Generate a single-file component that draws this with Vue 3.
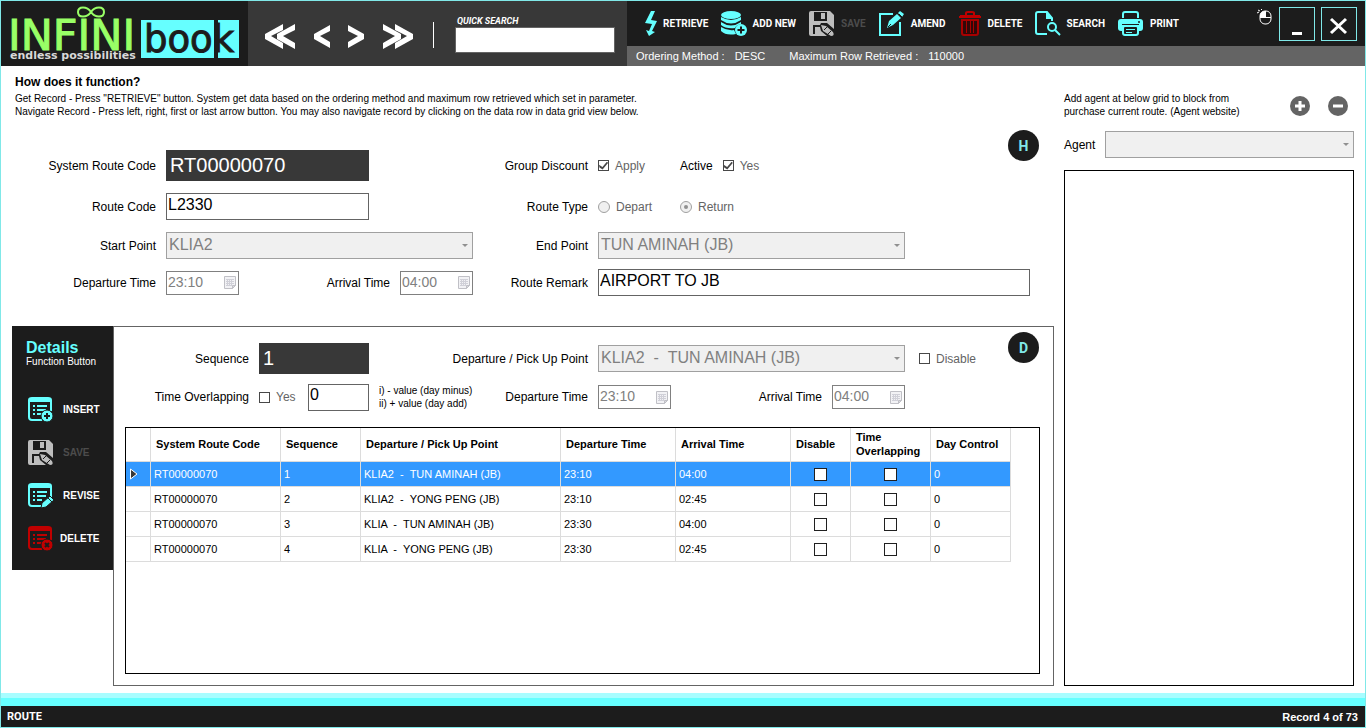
<script setup>
import { ref } from 'vue'

const quickSearch = ref('')
const agent = ref('')
const routeCode = ref('L2330')
const remark = ref('AIRPORT TO JB')
const dayControl = ref('0')

const columns = [
  { label: 'System Route Code', cls: 'c-code' },
  { label: 'Sequence', cls: 'c-seq' },
  { label: 'Departure / Pick Up Point', cls: 'c-point' },
  { label: 'Departure Time', cls: 'c-time' },
  { label: 'Arrival Time', cls: 'c-time' },
  { label: 'Disable', cls: 'c-disable' },
  { label: 'Time Overlapping', cls: 'c-over' },
  { label: 'Day Control', cls: 'c-day' },
]

const rows = [
  { seq: 1, point: 'KLIA2  -  TUN AMINAH (JB)', dep: '23:10', arr: '04:00' },
  { seq: 2, point: 'KLIA2  -  YONG PENG (JB)', dep: '23:10', arr: '02:45' },
  { seq: 3, point: 'KLIA  -  TUN AMINAH (JB)', dep: '23:30', arr: '04:00' },
  { seq: 4, point: 'KLIA  -  YONG PENG (JB)', dep: '23:30', arr: '02:45' },
]
const selected = ref(1)
</script>

<template>
  <div class="window">
    <svg class="defs" width="0" height="0" aria-hidden="true">
      <symbol id="i-save" viewBox="0 0 26 26">
        <path fill="currentColor" fill-rule="evenodd" d="M2 0H21L25 4V18L18 12H12L11 14H4V23H6V16H11L12 20L18 25H2Q0 25 0 23V2Q0 0 2 0ZM5 1V10H18V1Z" />
        <path fill="currentColor" d="M12 2H16V8H12ZM12 14L17 15L24 21Q26 25 22 25L14 20Z" />
        <path stroke="#1c1c1c" stroke-width="1" fill="none" d="M15 19L18 16M19 23L22 20" />
      </symbol>
      <symbol id="i-list" viewBox="0 0 26 26">
        <path fill="none" stroke="currentColor" stroke-width="2" d="M14 23H4Q1 23 1 20V3Q1 1 4 1H20Q23 1 23 3V14" />
        <path fill="currentColor" d="M1 1H23V5H1ZM5 8H7V10H5ZM9 8H19V10H9ZM5 12H7V14H5ZM9 12H18V14H9ZM5 16H7V18H5ZM9 16H14V18H9Z" />
      </symbol>
      <symbol id="i-calendar" viewBox="0 0 12 13">
        <path fill="#f2f2f5" stroke="#c0c0c6" d="M0.500 0.500H11.500V9.500L8.500 12.500H0.500Z" />
        <path stroke="#d0d0d8" fill="none" d="M2 3.500H10M2 5.500H10M2 7.500H10M2 9.500H8M3.500 3V10M5.500 3V10M7.500 3V10" />
        <path fill="#d8d8de" stroke="#c0c0c6" d="M8.500 12.500V9.500H11.500Z" />
      </symbol>
    </svg>

    <header class="header">
      <div class="logo">
        <svg width="240" height="64" viewBox="0 0 240 64" role="img" aria-label="INFINI book">
          <rect x="140" y="19" width="98" height="38" fill="#66ffff" />
          <path d="M215 19V57" stroke="#1c1c1c" stroke-width="4" />
          <path d="M90 11C86 5 77 5 77 11S86 17 90 11S103 5 103 11S94 17 90 11Z" fill="none" stroke="#99ff66" stroke-width="2" />
          <text class="logo-main" x="7" y="49">INFINI</text>
          <text class="logo-book" x="143" y="51">book</text>
          <text class="logo-tag" x="9" y="58">endless possibilities</text>
        </svg>
      </div>

      <div class="navigator">
        <nav class="arrows" aria-label="Record navigation">
          <button type="button" aria-label="First record">
            <svg width="32" height="27" viewBox="0 0 32 27"><path d="M19 1V7L7 13L19 20V26L1 16V11ZM31 1V7L19 13L31 20V26L13 16V11Z" /></svg>
          </button>
          <button type="button" aria-label="Previous record">
            <svg width="18" height="27" viewBox="0 0 18 27"><path d="M17 2V8L7 13L17 19V25L1 16V11Z" /></svg>
          </button>
          <button type="button" aria-label="Next record">
            <svg width="18" height="27" viewBox="0 0 18 27"><path d="M1 2V8L11 13L1 19V25L17 16V11Z" /></svg>
          </button>
          <button type="button" aria-label="Last record">
            <svg width="32" height="27" viewBox="0 0 32 27"><path d="M1 1V7L13 13L1 20V26L19 16V11ZM13 1V7L25 13L13 20V26L31 16V11Z" /></svg>
          </button>
        </nav>
        <span class="separator"></span>
        <div class="quick">
          <label for="quick">QUICK SEARCH</label>
          <input id="quick" v-model="quickSearch" type="text" />
        </div>
      </div>

      <div class="commands">
        <div class="toolbar">
          <button type="button" class="tool">
            <svg width="13" height="26" viewBox="0 0 13 26"><path fill="#66ffff" d="M6 0H10L6 9L12 10L7 20L10 21L4 25L1 19L4 20L7 13L0 12Z" /></svg>
            RETRIEVE
          </button>
          <button type="button" class="tool">
            <svg width="26" height="26" viewBox="0 0 26 26" fill="#66ffff">
              <ellipse cx="10" cy="4" rx="10" ry="4" />
              <path d="M0 6Q10 12 20 6V9Q10 16 0 9ZM0 11Q10 18 20 11V13Q15 14 14 17Q5 18 0 14ZM0 16Q6 20 13 19L15 23Q5 25 0 20Z" />
              <circle cx="20" cy="19" r="6" />
              <path d="M20 15.500V22.500M16.500 19H23.500" stroke="#1c1c1c" stroke-width="2" />
            </svg>
            ADD NEW
          </button>
          <button type="button" class="tool roomy off" disabled>
            <svg width="26" height="26"><use href="#i-save" /></svg>
            SAVE
          </button>
          <button type="button" class="tool roomy">
            <svg width="26" height="26" viewBox="0 0 26 26">
              <path fill="none" stroke="#66ffff" stroke-width="2" d="M14 3H1V24H21V11" />
              <path fill="#66ffff" d="M8 17L10 10L18 3L22 7L14 14ZM19 2L21 0L25 3L23 6Z" />
              <path stroke="#1c1c1c" d="M9 16L12 13M20 3L23 6" />
            </svg>
            AMEND
          </button>
          <button type="button" class="tool">
            <svg width="24" height="26" viewBox="0 0 24 26">
              <path fill="none" stroke="#c00000" stroke-width="2" d="M8 4V2Q8 1 10 1H14Q16 1 16 2V4M1 6H23" />
              <path fill="#c00000" d="M2 4H22V7H2Z" />
              <path fill="#300808" stroke="#a80000" stroke-width="2" d="M4 9H20V22Q20 24 18 24H6Q4 24 4 22Z" />
              <path stroke="#a80000" stroke-width="1" d="M8.500 10V22M12.500 10V22M15.500 10V22" />
            </svg>
            DELETE
          </button>
          <button type="button" class="tool">
            <svg width="26" height="26" viewBox="0 0 26 26" fill="none" stroke="#66ffff" stroke-width="2">
              <path d="M12 23H3Q1 23 1 21V3Q1 1 3 1H12L17 7V10" />
              <path fill="#66ffff" stroke="none" d="M11 0L18 8H11Z" />
              <circle cx="17" cy="16" r="4" />
              <path d="M20 19L25 24" />
            </svg>
            SEARCH
          </button>
          <button type="button" class="tool roomy">
            <svg width="26" height="26" viewBox="0 0 26 26">
              <path fill="none" stroke="#66ffff" stroke-width="2" d="M5 7V3Q5 1 7 1H18Q20 1 20 3V7" />
              <rect y="8" width="25" height="12" rx="3" fill="#66ffff" />
              <rect x="5" y="15" width="15" height="9" rx="2" fill="#1c1c1c" stroke="#66ffff" stroke-width="2" />
              <path stroke="#66ffff" stroke-width="1" d="M8 18.500H17M8 21.500H14" />
              <path stroke="#1c1c1c" stroke-width="1" d="M4 13.500H21" />
              <circle cx="21" cy="11" r="1" fill="#1c1c1c" />
            </svg>
            PRINT
          </button>
          <div class="system">
            <svg class="mouse" width="16" height="16" viewBox="0 0 16 16">
              <rect x="3" y="2" width="11" height="13" rx="5" fill="none" stroke="#fff" stroke-width="1" />
              <path fill="#fff" d="M3 8V6Q4 2 8 2V8Z" />
              <path stroke="#fff" fill="none" d="M3 8.500H14M8.500 2V8M0 4L2 3M1 1L3 2M4 0L5 1" />
            </svg>
            <button type="button" class="sys" aria-label="Minimise">
              <svg width="26" height="26"><path d="M8 21H18V24H8Z" fill="#fff" /></svg>
            </button>
            <button type="button" class="sys" aria-label="Close">
              <svg width="26" height="26"><path d="M5 8L20 22M20 8L5 22" stroke="#fff" stroke-width="3" /></svg>
            </button>
          </div>
        </div>
        <div class="params">
          <span>Ordering Method :</span><span>DESC</span>
          <span class="param-max">Maximum Row Retrieved :</span><span>110000</span>
        </div>
      </div>
    </header>

    <main class="main">
      <section class="left">
        <span class="badge badge-h">H</span>
        <div class="intro">
          <h1>How does it function?</h1>
          <p>Get Record - Press "RETRIEVE" button. System get data based on the ordering method and maximum row retrieved which set in parameter.</p>
          <p>Navigate Record - Press left, right, first or last arrow button. You may also navigate record by clicking on the data row in data grid view below.</p>
        </div>

        <form class="route" @submit.prevent>
          <label for="sys">System Route Code</label>
          <input id="sys" class="box dark code" value="RT00000070" readonly />
          <span class="lab">Group Discount</span>
          <div class="choices">
            <label class="opt"><input type="checkbox" checked disabled />Apply</label>
            <span class="lab active-lab">Active</span>
            <label class="opt"><input type="checkbox" checked disabled />Yes</label>
          </div>

          <label for="code">Route Code</label>
          <input id="code" v-model="routeCode" class="box code" />
          <span class="lab">Route Type</span>
          <div class="choices">
            <label class="opt depart"><input type="radio" name="type" disabled />Depart</label>
            <label class="opt"><input type="radio" name="type" checked disabled />Return</label>
          </div>

          <label for="start">Start Point</label>
          <div class="drop"><select id="start" disabled><option>KLIA2</option></select></div>
          <label for="end">End Point</label>
          <div class="drop point"><select id="end" disabled><option>TUN AMINAH (JB)</option></select></div>

          <label for="dep">Departure Time</label>
          <div class="times">
            <div class="time"><input id="dep" value="23:10" disabled /><svg width="12" height="13"><use href="#i-calendar" /></svg></div>
            <div class="pair">
              <label for="arr">Arrival Time</label>
              <div class="time"><input id="arr" value="04:00" disabled /><svg width="12" height="13"><use href="#i-calendar" /></svg></div>
            </div>
          </div>
          <label for="remark">Route Remark</label>
          <input id="remark" v-model="remark" class="box" />
        </form>

        <div class="details">
          <aside class="side">
            <h2>Details</h2>
            <p>Function Button</p>
            <button type="button" class="side-btn cyan">
              <svg width="26" height="26" viewBox="0 0 26 26">
                <use href="#i-list" />
                <circle cx="19" cy="19" r="6" fill="#66ffff" stroke="#1c1c1c" />
                <path d="M19 16V22M16 19H22" stroke="#1c1c1c" stroke-width="2" />
              </svg>
              <span>INSERT</span>
            </button>
            <button type="button" class="side-btn off" disabled>
              <svg width="26" height="26"><use href="#i-save" /></svg>
              <span>SAVE</span>
            </button>
            <button type="button" class="side-btn cyan">
              <svg width="26" height="26" viewBox="0 0 26 26">
                <use href="#i-list" />
                <path fill="#66ffff" stroke="#1c1c1c" d="M13 25L14 20L22 13L26 17L18 24Z" />
                <path stroke="#1c1c1c" d="M20 15L24 19" />
              </svg>
              <span>REVISE</span>
            </button>
            <button type="button" class="side-btn red">
              <svg width="26" height="26" viewBox="0 0 26 26">
                <use href="#i-list" />
                <circle cx="19" cy="19" r="6" fill="#c00000" stroke="#1c1c1c" />
                <path d="M17 17L21 21M21 17L17 21" stroke="#1c1c1c" stroke-width="2" />
              </svg>
              <span>DELETE</span>
            </button>
          </aside>

          <div class="panel">
            <span class="badge badge-d">D</span>
            <form class="detail-form" @submit.prevent>
              <label for="seq">Sequence</label>
              <input id="seq" class="box dark" value="1" readonly />
              <label for="pickup">Departure / Pick Up Point</label>
              <div class="choices">
                <div class="drop point"><select id="pickup" disabled><option>KLIA2 &nbsp;- &nbsp;TUN AMINAH (JB)</option></select></div>
                <label class="opt disable"><input type="checkbox" disabled />Disable</label>
              </div>

              <label for="over">Time Overlapping</label>
              <div class="overlap">
                <label class="opt"><input id="over" type="checkbox" disabled />Yes</label>
                <input v-model="dayControl" class="box day" aria-label="Day control value" />
              </div>
              <div class="hint-row">
                <p class="hint">i) - value (day minus)<br />ii) + value (day add)</p>
                <label for="ddep">Departure Time</label>
              </div>
              <div class="times point">
                <div class="time"><input id="ddep" value="23:10" disabled /><svg width="12" height="13"><use href="#i-calendar" /></svg></div>
                <div class="pair">
                  <label for="darr">Arrival Time</label>
                  <div class="time"><input id="darr" value="04:00" disabled /><svg width="12" height="13"><use href="#i-calendar" /></svg></div>
                </div>
              </div>
            </form>

            <div class="grid-box">
              <table>
                <thead>
                  <tr>
                    <th class="c-mark"></th>
                    <th v-for="c in columns" :key="c.label" :class="c.cls">{{ c.label }}</th>
                  </tr>
                </thead>
                <tbody>
                  <tr v-for="r in rows" :key="r.seq" :class="{ selected: r.seq === selected }" @click="selected = r.seq">
                    <td class="mark">
                      <svg v-if="r.seq === selected" width="9" height="12" viewBox="0 0 9 12"><path d="M1.500 1L8 6L1.500 11Z" fill="#383838" stroke="#fff" /></svg>
                    </td>
                    <td>RT00000070</td>
                    <td>{{ r.seq }}</td>
                    <td>{{ r.point }}</td>
                    <td>{{ r.dep }}</td>
                    <td>{{ r.arr }}</td>
                    <td class="tick"><input type="checkbox" aria-label="Disable" /></td>
                    <td class="tick"><input type="checkbox" aria-label="Time overlapping" /></td>
                    <td>0</td>
                  </tr>
                </tbody>
              </table>
            </div>
          </div>
        </div>
      </section>

      <section class="right">
        <div class="agent-top">
          <p>Add agent at below grid to block from<br />purchase current route. (Agent website)</p>
          <div class="agent-actions">
            <button type="button" aria-label="Add agent">
              <svg width="20" height="20"><circle cx="10" cy="10" r="10" fill="#646464" /><path d="M10 5V15M5 10H15" stroke="#fff" stroke-width="3" /></svg>
            </button>
            <button type="button" aria-label="Remove agent">
              <svg width="20" height="20"><circle cx="10" cy="10" r="10" fill="#646464" /><path d="M5 10H15" stroke="#fff" stroke-width="3" /></svg>
            </button>
          </div>
        </div>
        <div class="agent-row">
          <label for="agent">Agent</label>
          <div class="drop"><select id="agent" v-model="agent" disabled><option value=""></option></select></div>
        </div>
        <div class="agent-list"></div>
      </section>
    </main>

    <div class="strip"></div>
    <footer class="footer">
      <span class="page-name">ROUTE</span>
      <span>Record 4 of 73</span>
    </footer>
  </div>
</template>

<style>
body {
  margin: 0;
}
</style>

<style scoped>
.window,
.window * {
  box-sizing: border-box;
}
.window {
  display: flex;
  flex-direction: column;
  min-height: 100vh;
  border: 1px solid #80e8e8;
  background: #fff;
  color: #000;
  font: 12px/14px "Liberation Sans", Arial, sans-serif;
}
.defs {
  position: absolute;
}
.window svg {
  display: block;
  flex: none;
}
h1, h2, p {
  margin: 0;
}
button {
  margin: 0;
  padding: 0;
  border: 0;
  background: none;
  color: inherit;
  font: inherit;
}
input, select {
  margin: 0;
  font-family: inherit;
  border-radius: 0;
}

/* header */
.header {
  display: flex;
  height: 65px;
}
.logo {
  width: 247px;
  background: #1c1c1c;
}
.logo-main {
  font: 43px "DejaVu Sans", sans-serif;
  fill: #99ff66;
  stroke: #99ff66;
}
.logo-book {
  font: 37px "DejaVu Sans", sans-serif;
  fill: #1c1c1c;
  stroke: #1c1c1c;
}
.logo-tag {
  font: bold 11px "DejaVu Sans", sans-serif;
  fill: #d8d8d8;
}
.navigator {
  display: flex;
  width: 379px;
  padding: 0 12px 0 16px;
  background: #383838;
}
.arrows {
  display: flex;
  align-items: center;
  justify-content: space-between;
  width: 150px;
  padding-top: 6px;
}
.arrows path {
  fill: #fff;
}
.separator {
  width: 1px;
  height: 26px;
  margin: 21px 21px 0 19px;
  background: #fff;
}
.quick {
  display: flex;
  flex: 1;
  flex-direction: column;
  padding-top: 14px;
  color: #fff;
  font: italic bold 9px/12px Roboto, sans-serif;
}
.quick label {
  padding-left: 2px;
}
.quick input {
  width: 100%;
  height: 26px;
  padding: 0 2px;
  border: 1px solid #646464;
  background: #fff;
  font-size: 16px;
}
.commands {
  display: flex;
  flex: 1;
  flex-direction: column;
}
.toolbar {
  display: flex;
  align-items: center;
  gap: 13px;
  height: 45px;
  padding: 0 8px 0 18px;
  background: #1c1c1c;
  color: #fff;
  font: bold 10px/14px Roboto, sans-serif;
}
.tool {
  display: flex;
  align-items: center;
  gap: 5px;
  white-space: nowrap;
}
.roomy {
  gap: 6px;
}
.off {
  color: #4c4c4c;
}
.off svg {
  color: #bdbdbd;
}
.system {
  display: flex;
  gap: 6px;
  margin-left: auto;
}
.mouse {
  margin-top: 2px;
}
.sys {
  display: grid;
  place-items: center;
  width: 36px;
  height: 34px;
  border: 1px solid #80e8e8;
}
.params {
  display: flex;
  align-items: center;
  gap: 10px;
  height: 20px;
  padding-left: 9px;
  background: #646464;
  color: #fff;
  font-size: 11px;
}
.param-max {
  margin-left: 14px;
}

/* body */
.main {
  display: flex;
  flex: 1;
  gap: 10px;
  padding: 0 11px 7px;
}
.left {
  position: relative;
  display: flex;
  flex: 1;
  flex-direction: column;
  min-width: 0;
}
.intro {
  height: 78px;
  padding: 9px 0 0 3px;
  font-size: 10px;
  line-height: 13px;
  white-space: nowrap;
}
.intro h1 {
  margin-bottom: 3px;
  font-size: 12px;
  line-height: 14px;
}
.badge {
  position: absolute;
  display: grid;
  place-items: center;
  width: 31px;
  height: 31px;
  border-radius: 50%;
  background: #1c1c1c;
  color: #80e8e8;
  font: bold 14px/16px Roboto, sans-serif;
}
.badge-h {
  top: 64px;
  right: 15px;
}
.badge-d {
  top: 5px;
  right: 14px;
}
.route {
  display: grid;
  grid-template-columns: 144px 307px 105px 1fr;
  grid-template-rows: 43px 39px 39px 35px;
  column-gap: 10px;
  align-items: center;
  height: 182px;
  padding-right: 24px;
}
.route > label,
.route > .lab,
.detail-form > label {
  text-align: right;
}
.box {
  width: 100%;
  height: 27px;
  padding: 0 1px 4px;
  border: 1px solid #646464;
  background: #fff;
  color: #000;
  font-size: 16px;
}
.code {
  width: 203px;
}
.dark {
  height: 31px;
  padding: 0 4px;
  border: 0;
  background: #383838;
  color: #fff;
  font-size: 20px;
}
.choices {
  display: flex;
  align-items: center;
}
.opt {
  display: flex;
  align-items: center;
  gap: 6px;
  color: #646464;
}
.active-lab {
  margin: 0 10px 0 35px;
}
.depart {
  width: 82px;
}
input[type="checkbox"],
input[type="radio"] {
  display: grid;
  place-items: center;
  flex: none;
  appearance: none;
  width: 11px;
  height: 11px;
  border: 1px solid #484848;
  background: #fff;
}
input[type="checkbox"]:checked::after {
  width: 9px;
  height: 8px;
  background: #484848;
  clip-path: polygon(0 40%, 38% 70%, 90% 0, 100% 20%, 40% 100%, 5% 75%);
  content: "";
}
input[type="radio"] {
  width: 12px;
  height: 12px;
  border-color: #a0a0a0;
  border-radius: 50%;
  background: #f0f0f0;
}
input[type="radio"]:checked::after {
  width: 4px;
  height: 4px;
  border-radius: 50%;
  background: #909090;
  content: "";
}
.drop {
  position: relative;
}
.drop::after {
  position: absolute;
  top: 12px;
  right: 5px;
  border: 3px solid transparent;
  border-top-color: #909090;
  content: "";
}
.drop select {
  display: block;
  width: 100%;
  height: 27px;
  padding: 0 2px 3px;
  border: 1px solid #a0a0a0;
  appearance: none;
  background: #f0f0f0;
  color: #808080;
  font-size: 16px;
  opacity: 1;
}
.point {
  width: 307px;
}
.times,
.pair {
  display: flex;
  align-items: center;
  justify-content: space-between;
}
.pair {
  gap: 10px;
}
.time {
  display: flex;
  align-items: center;
  width: 73px;
  height: 24px;
  padding: 0 2px 0 1px;
  border: 1px solid #808080;
}
.time input {
  flex: 1;
  min-width: 0;
  padding: 0 0 2px;
  border: 0;
  background: none;
  color: #808080;
  font-size: 14px;
}

/* details */
.details {
  display: flex;
  flex: 1;
}
.side {
  align-self: flex-start;
  width: 101px;
  height: 244px;
  padding: 14px 0 0 14px;
  background: #1c1c1c;
  color: #fff;
  font-size: 10px;
}
.side h2 {
  color: #66ffff;
  font-size: 16px;
  line-height: 16px;
}
.side p {
  height: 32px;
  line-height: 12px;
}
.side-btn {
  display: flex;
  align-items: center;
  gap: 9px;
  height: 43px;
  padding-left: 2px;
  font-weight: bold;
}
.cyan svg {
  color: #66ffff;
}
.red {
  gap: 6px;
}
.red svg {
  color: #c00000;
}
.panel {
  position: relative;
  display: flex;
  flex: 1;
  flex-direction: column;
  min-width: 0;
  padding: 12px 13px 11px 11px;
  border: 1px solid #646464;
}
.detail-form {
  display: grid;
  grid-template-columns: 124px 110px 209px 1fr;
  grid-template-rows: 39px 38px;
  column-gap: 10px;
  align-items: center;
  height: 88px;
}
.overlap,
.hint-row {
  display: flex;
  align-items: center;
  justify-content: space-between;
}
.day {
  width: 61px;
}
.hint {
  font-size: 10px;
  line-height: 13px;
}
.disable {
  margin-left: 14px;
}
.grid-box {
  flex: 1;
  border: 1px solid #000;
}
table {
  table-layout: fixed;
  width: 885px;
  border-collapse: separate;
  border-spacing: 0;
  font-size: 11px;
}
th, td {
  padding: 0 3px;
  border-right: 1px solid #dcdcdc;
  border-bottom: 1px solid #dcdcdc;
  text-align: left;
  white-space: pre;
}
th {
  height: 34px;
  padding: 0 5px 2px;
  line-height: 14px;
  white-space: normal;
}
td {
  height: 25px;
}
.c-mark { width: 25px; }
.c-code { width: 130px; }
.c-seq { width: 80px; }
.c-point { width: 200px; }
.c-time { width: 115px; }
.c-disable { width: 60px; }
.c-over { width: 80px; }
.c-day { width: 80px; }
.selected td {
  background: #3399ff;
  color: #fff;
}
.tick input {
  width: 13px;
  height: 13px;
  margin: 0 auto;
  border-color: #202020;
}

/* agent column */
.right {
  display: flex;
  flex-direction: column;
  width: 290px;
  padding-top: 26px;
}
.agent-top {
  display: flex;
  justify-content: space-between;
  height: 39px;
  padding-right: 6px;
  font-size: 10px;
  line-height: 13px;
}
.agent-actions {
  display: flex;
  gap: 18px;
  padding-top: 4px;
}
.agent-actions button {
  height: 20px;
}
.agent-row {
  display: flex;
  align-items: center;
  gap: 10px;
  margin-bottom: 12px;
}
.agent-row .drop {
  flex: 1;
}
.agent-list {
  flex: 1;
  border: 1px solid #000;
}

/* footer */
.strip {
  height: 13px;
  border-top: 5px solid #a8fdff;
  background: #66ffff;
}
.footer {
  display: flex;
  align-items: center;
  justify-content: space-between;
  height: 21px;
  padding: 0 7px 0 6px;
  background: #1c1c1c;
  color: #fff;
  font-size: 11px;
  font-weight: bold;
}
.page-name {
  font-family: Roboto, sans-serif;
}
</style>
